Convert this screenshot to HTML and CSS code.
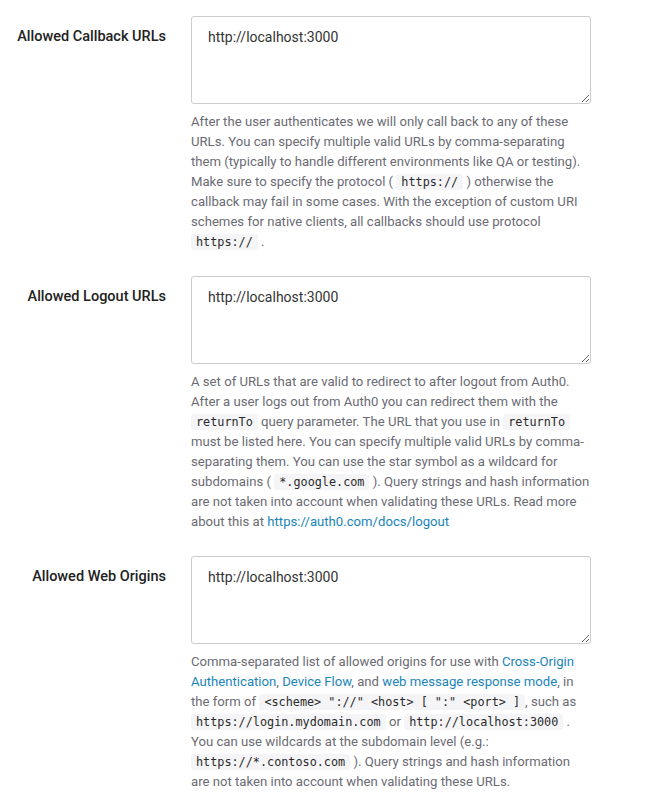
FILE: index.html
```html
<!DOCTYPE html>
<html>
<head>
<meta charset="utf-8">
<link rel="stylesheet" href="styles.css">
</head>
<body>
<div class="form">
  <div class="row">
    <label class="label">Allowed Callback URLs</label>
    <div class="field">
      <textarea class="input">http://localhost:3000</textarea>
      <p class="help">After the user authenticates we will only call back to any of these URLs. You can specify multiple valid URLs by comma-separating them (typically to handle different environments like QA or testing). Make sure to specify the protocol ( <code>https://</code> ) otherwise the callback may fail in some cases. With the exception of custom URI schemes for native clients, all callbacks should use protocol <code>https://</code> .</p>
    </div>
  </div>
  <div class="row">
    <label class="label">Allowed Logout URLs</label>
    <div class="field">
      <textarea class="input">http://localhost:3000</textarea>
      <p class="help">A set of URLs that are valid to redirect to after logout from Auth0. After a user logs out from Auth0 you can redirect them with the <code>returnTo</code> query parameter. The URL that you use in <code>returnTo</code> must be listed here. You can specify multiple valid URLs by comma-separating them. You can use the star symbol as a wildcard for subdomains ( <code>*.google.com</code> ). Query strings and hash information are not taken into account when validating these URLs. Read more about this at <a href="#">https://auth0.com/docs/logout</a></p>
    </div>
  </div>
  <div class="row">
    <label class="label">Allowed Web Origins</label>
    <div class="field">
      <textarea class="input">http://localhost:3000</textarea>
      <p class="help">Comma-separated list of allowed origins for use with <a href="#">Cross-Origin Authentication</a>, <a href="#">Device Flow</a>, and <a href="#">web message response mode</a>, in the form of <code>&lt;scheme&gt; "://" &lt;host&gt; [ ":" &lt;port&gt; ]</code>, such as <code>https://login.mydomain.com</code> or <code>http://localhost:3000</code> . You can use wildcards at the subdomain level (e.g.: <code>https://*.contoso.com</code> ). Query strings and hash information are not taken into account when validating these URLs.</p>
    </div>
  </div>
</div>
</body>
</html>
```

FILE: styles.css
```css
html, body {
  margin: 0;
  padding: 0;
  background: #fff;
}
body {
  font-family: Roboto, "Noto Sans", sans-serif;
  color: #333;
}
.form {
  padding-top: 16px;
  display: flex;
  flex-direction: column;
  gap: 24px;
}
.row {
  display: grid;
  grid-template-columns: 166px 400px;
  column-gap: 25px;
}
.label {
  text-align: right;
  font-size: 14.5px;
  font-weight: 500;
  color: #222;
  padding-top: 11px;
  line-height: 20px;
}
.field {
  display: flex;
  flex-direction: column;
}
.input {
  box-sizing: border-box;
  width: 400px;
  height: 88px;
  border: 1px solid #ccc;
  border-radius: 3px;
  padding: 10px 16px;
  font-family: Roboto, "Noto Sans", sans-serif;
  font-size: 14px;
  line-height: 20px;
  color: #333;
  margin: 0;
  resize: vertical;
}
.help {
  margin: 8px 0 0;
  font-size: 13.15px;
  line-height: 20px;
  color: #6b6b73;
}
.help code {
  font-family: "DejaVu Sans Mono", monospace;
  font-size: 11.8px;
  color: #2a2a2a;
  background: #f5f5f7;
  border-radius: 3px;
  padding: 1px 5px;
}
.help a {
  color: #1a84b8;
  text-decoration: none;
}
```
